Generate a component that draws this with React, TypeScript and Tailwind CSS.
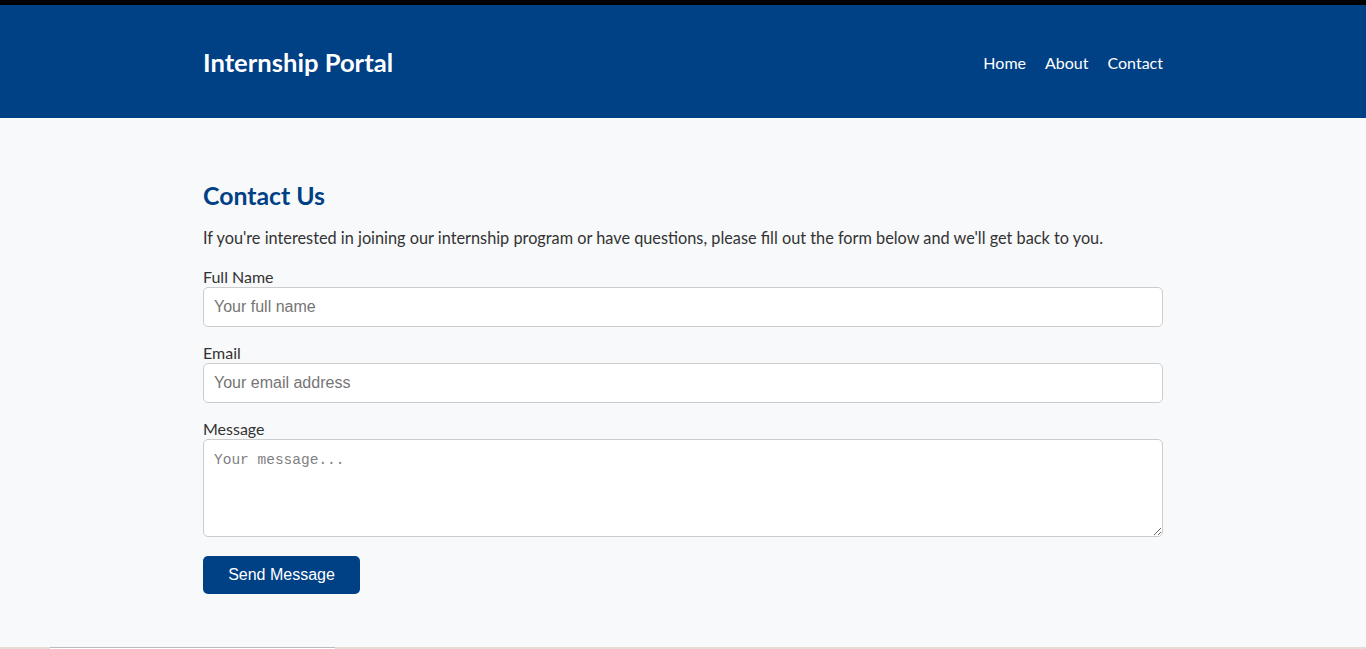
export default function App() {
  const font = { fontFamily: 'Lato, "Noto Sans", sans-serif' };
  return (
    <div className="min-h-screen flex flex-col bg-[#f8f9fa]" style={font}>
      <div className="h-[5px] bg-black" />
      <header className="h-[113px] bg-[#004085] text-white">
        <div className="mx-auto w-[960px] h-full flex items-center justify-between">
          <h1 className="text-[25.6px] font-bold leading-none mt-[2px]">Internship Portal</h1>
          <nav className="flex gap-[19px] text-[16px] mt-[2px]">
            <a>Home</a>
            <a>About</a>
            <a>Contact</a>
          </nav>
        </div>
      </header>
      <main className="flex-1">
        <div className="mx-auto w-[960px] pt-[63px] text-[#333]">
          <h2 className="text-[24.8px] font-bold text-[#004085] leading-[30px]">Contact Us</h2>
          <p className="mt-[16px] text-[16.3px] leading-[22px]">
            If you're interested in joining our internship program or have questions, please fill out the form below and we'll get back to you.
          </p>
          <form className="mt-[18px] flex flex-col">
            <label className="text-[16px] leading-[20px]">Full Name</label>
            <input
              placeholder="Your full name"
              className="h-[40px] px-[10px] border border-[#ccc] rounded-[5px] bg-white text-[16px] placeholder:text-[#757575] outline-none"
              style={{ fontFamily: '"Liberation Sans", Arial, sans-serif' }}
            />
            <label className="mt-[16px] text-[16px] leading-[20px]">Email</label>
            <input
              placeholder="Your email address"
              className="h-[40px] px-[10px] border border-[#ccc] rounded-[5px] bg-white text-[16px] placeholder:text-[#757575] outline-none"
              style={{ fontFamily: '"Liberation Sans", Arial, sans-serif' }}
            />
            <label className="mt-[16px] text-[16px] leading-[20px]">Message</label>
            <textarea
              placeholder="Your message..."
              className="h-[98px] px-[10px] py-[10px] border border-[#ccc] rounded-[5px] bg-white text-[14.5px] placeholder:text-[#808080] outline-none"
              style={{ fontFamily: '"Liberation Mono", monospace' }}
            />
            <div className="mt-[19px]">
              <button
                type="button"
                className="h-[38px] w-[157px] rounded-[5px] bg-[#004085] text-white text-[16px]"
                style={{ fontFamily: '"Liberation Sans", Arial, sans-serif' }}
              >
                Send Message
              </button>
            </div>
          </form>
        </div>
      </main>
      <div className="h-[2px] bg-[#e6dcd6] flex">
        <div className="ml-[50px] w-[285px] bg-white border-t border-[#bbb]" />
      </div>
    </div>
  );
}
